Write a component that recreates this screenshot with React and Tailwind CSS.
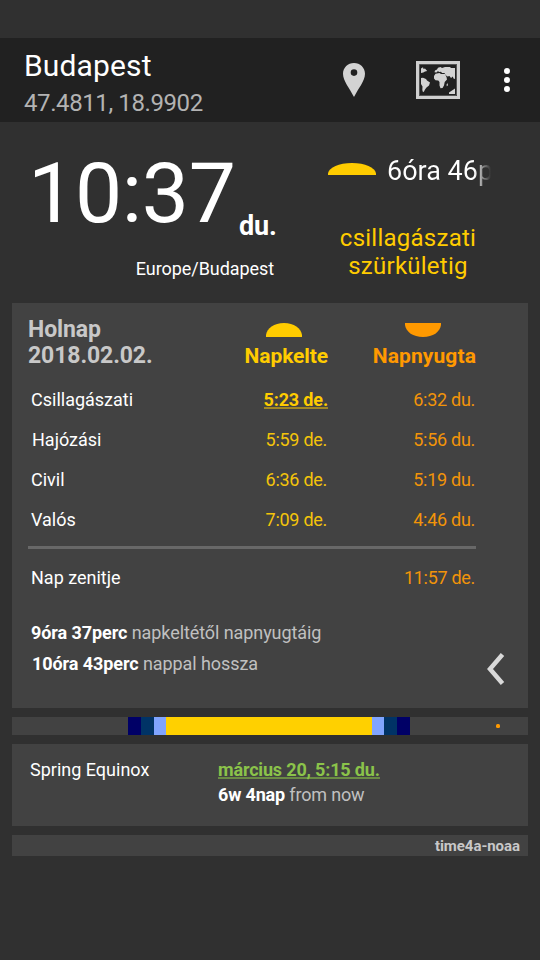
const times = [
  { name: 'Csillagászati', rise: '5:23 de.', set: '6:32 du.', pad: 'pl-[3px]', next: true },
  { name: 'Hajózási', rise: '5:59 de.', set: '5:56 du.', pad: 'pl-[4px]' },
  { name: 'Civil', rise: '6:36 de.', set: '5:19 du.', pad: 'pl-[3px]' },
  { name: 'Valós', rise: '7:09 de.', set: '4:46 du.', pad: 'pl-[3px]' },
];

const SunUp = ({ className, fill }) => (
  <svg className={className} viewBox="0 0 36 14" preserveAspectRatio="none" fill={fill}>
    <path d="M0 14V12C1 5 8 0 18 0s17 5 18 12v2z" />
  </svg>
);

const SunDown = ({ className, fill }) => (
  <svg className={className} viewBox="0 0 36 14" preserveAspectRatio="none" fill={fill}>
    <path d="M0 0v2c1 7 8 12 18 12S35 9 36 2V0z" />
  </svg>
);

const PinIcon = () => (
  <svg className="h-[34px] w-[22px]" viewBox="0 0 22 34" fill="#d3d3d3">
    <path fillRule="evenodd" d="M11 0C4.9 0 0 4.700 0 10.700C0 18 6.800 25.500 11 34C15.200 25.500 22 18 22 10.700C22 4.700 17.100 0 11 0zM11 6.300a3.300 3.300 0 1 1 0 6.600a3.300 3.300 0 0 1 0-6.600z" />
  </svg>
);

const MapIcon = () => (
  <svg className="h-[38px] w-[44px]" viewBox="0 0 44 38">
    <rect x="1.500" y="1.500" width="41" height="35" fill="none" stroke="#cfcfcf" strokeWidth="3" />
    <rect x="3.500" y="3.500" width="37" height="31" fill="none" stroke="#6c6c6c" strokeWidth="0.700" />
    <g fill="#d3d3d3">
      <path d="M5 7.500L7 6.300L7.500 8L9 7.500L11.200 10L9 10.500L7.300 11.500L5 12z" />
      <path d="M5 17L7 16.800L10 18L11 19.500L14 21.500L13 24.500L10.500 26.500L9 28.500L8 30.500L7 31.300L6.300 29L6.500 25.500L5 23z" />
      <path d="M18 15L19.500 12.700L23.500 12L25 13L29 13L30.500 16L31 18.500L28.700 21L28 24.500L26.500 27L24.500 27.300L23.500 24.500L23.500 21L22.300 19.500L19.500 19.300L18 17.500z" />
      <path d="M18.500 11.300L19 9.500L21 8.500L22 6.800L24.500 6L26 7L29 6L34 6L35 7L39 7L39 18L37.500 17.500L36.800 15.500L35 17L33.500 15L31.500 15.500L29.500 14L28.500 12L26 12L25 10.800L23 11L22 10L20.500 11.500z" />
      <path d="M30.700 23.500L32 22L31.700 24.800L30.700 25.300z" />
      <path d="M33 31.500L36 29.500L37.500 28.500L39 27.500V33H33z" />
    </g>
  </svg>
);

export default function App() {
  return (
    <div className="flex h-[960px] w-[540px] flex-col overflow-hidden bg-[#303030] font-['Roboto',sans-serif] text-[18px] leading-[24px] text-white">
      <header className="mt-[38px] flex h-[84px] shrink-0 bg-[#212121] pl-[24px]">
        <div className="w-[319px] pt-[10px]">
          <h1 className="text-[30px] leading-[36px] tracking-[0.15px]">Budapest</h1>
          <p className="mt-[5px] text-[24px] leading-[28px] tracking-[-0.4px] text-[#b3b3b3]">47.4811, 18.9902</p>
        </div>
        <div className="pt-[25px]"><PinIcon /></div>
        <div className="ml-[51px] pt-[23px]"><MapIcon /></div>
        <div className="ml-[44px] flex flex-col gap-[3px] pt-[30px]">
          <i className="size-[6px] rounded-full bg-white" />
          <i className="size-[6px] rounded-full bg-white" />
          <i className="size-[6px] rounded-full bg-white" />
        </div>
      </header>

      <section className="flex h-[181px] shrink-0">
        <div className="w-[300px] pl-[28px]">
          <div className="flex h-[131px] items-start">
            <span className="w-[211px] pt-[22px] text-[84px] leading-[100px] tracking-[-0.3px]">10:37</span>
            <span className="pt-[88px] text-[27px] font-bold leading-[32px] tracking-[-0.2px]">du.</span>
          </div>
          <p className="w-[246px] pt-[4px] text-right tracking-[-0.07px]">Europe/Budapest</p>
        </div>
        <div className="w-[192px] pl-[28px]">
          <div className="flex">
            <SunUp className="mt-[41px] h-[12px] w-[48px] shrink-0" fill="#ffcc00" />
            <p className="ml-[11px] mt-[33px] w-[104px] whitespace-nowrap bg-linear-to-r from-white from-84% to-[#303030] bg-clip-text text-[27px] leading-[32px] text-transparent">6óra 46p</p>
          </div>
          <p className="mt-[37px] w-[160px] text-center text-[24px] leading-[28px] tracking-[0.25px] text-[#ffcc00]">csillagászati<br />szürkületig</p>
        </div>
      </section>

      <main className="mx-[12px] flex h-[405px] shrink-0 bg-[#424242] pl-[16px]">
        <div className="w-[448px]">
          <div className="flex h-[77px]">
            <h2 className="w-[200px] pt-[14px] text-[23px] font-bold leading-[26px] tracking-[-0.1px] text-[#c8c8c8]">Holnap<br />2018.02.02.</h2>
            <div className="flex w-[100px] flex-col items-end pt-[20px] text-[#ffcc00]">
              <SunUp className="mr-[26px] h-[14px] w-[36px]" fill="#ffcc00" />
              <span className="mt-[7px] text-[21px] font-bold leading-[24px] tracking-[-0.1px]">Napkelte</span>
            </div>
            <div className="flex w-[148px] flex-col items-end pt-[20px] text-[#ff9900]">
              <SunDown className="mr-[35px] h-[14px] w-[36px]" fill="#ff9900" />
              <span className="mt-[7px] text-[21px] font-bold leading-[24px] tracking-[0.1px]">Napnyugta</span>
            </div>
          </div>
          {times.map((t) => (
            <div key={t.name} className="flex h-[40px] items-center">
              <span className={`w-[180px] ${t.pad}`}>{t.name}</span>
              <span className="flex w-[120px] justify-end tracking-[-0.28px] text-[#f4c40a]">
                {t.next
                  ? <b className="mb-[2px] h-[20px] border-b-2 border-[#a18723] leading-[22px] tracking-[-0.15px] text-[#ffcc00]">{t.rise}</b>
                  : <span className="pr-[1px]">{t.rise}</span>}
              </span>
              <span className="w-[148px] pr-[1px] text-right tracking-[-0.28px] text-[#f29409]">{t.set}</span>
            </div>
          ))}
          <div className="mt-[6px] h-[3px] bg-[#686868]" />
          <div className="mt-[17px] flex justify-between pl-[3px] pr-[1px]">
            <span>Nap zenitje</span>
            <span className="tracking-[-0.3px] text-[#f29409]">11:57 de.</span>
          </div>
          <p className="mt-[31px] pl-[3px] tracking-[-0.08px] text-[#c0c0c0]"><b className="text-white">9óra 37perc</b> napkeltétől napnyugtáig</p>
          <p className="mt-[7px] pl-[4px] tracking-[-0.08px] text-[#c0c0c0]"><b className="text-white">10óra 43perc</b> nappal hossza</p>
        </div>
        <svg className="ml-[11px] mt-[350px] h-[32px] w-[18px]" viewBox="0 0 18 32" fill="none" stroke="#d9d9d9" strokeWidth="4.500">
          <path d="M15.500 1.500L3 16l12.500 14.500" />
        </svg>
      </main>

      <div className="mx-[12px] mt-[9px] flex h-[18px] shrink-0 items-center bg-[#424242] pl-[116px]">
        <i className="h-full w-[13px] bg-[#000066]" />
        <i className="h-full w-[13px] bg-[#003366]" />
        <i className="h-full w-[12px] bg-[#80a4ff]" />
        <i className="h-full w-[206px] bg-[#ffd000]" />
        <i className="h-full w-[12px] bg-[#80a4ff]" />
        <i className="h-full w-[13px] bg-[#003366]" />
        <i className="h-full w-[13px] bg-[#000066]" />
        <i className="ml-[86px] size-[4px] rounded-[1.5px] bg-[#ff9900]" />
      </div>

      <section className="mx-[12px] mt-[9px] flex h-[82px] shrink-0 bg-[#424242] pl-[18px] pt-[14px]">
        <span className="w-[188px]">Spring Equinox</span>
        <div className="tracking-[-0.17px]">
          <b className="block h-[21px] border-b-2 border-[#6a8b44] text-[#8bc34a]">március 20, 5:15 du.</b>
          <p className="mt-[4px] text-[#c0c0c0]"><b className="text-white">6w 4nap</b> from now</p>
        </div>
      </section>

      <footer className="mx-[12px] mt-[9px] h-[21px] shrink-0 bg-[#424242] pr-[8px] text-right text-[15px] font-bold leading-[22px] tracking-[-0.05px] text-[#c8c8c8]">time4a-noaa</footer>
    </div>
  );
}
